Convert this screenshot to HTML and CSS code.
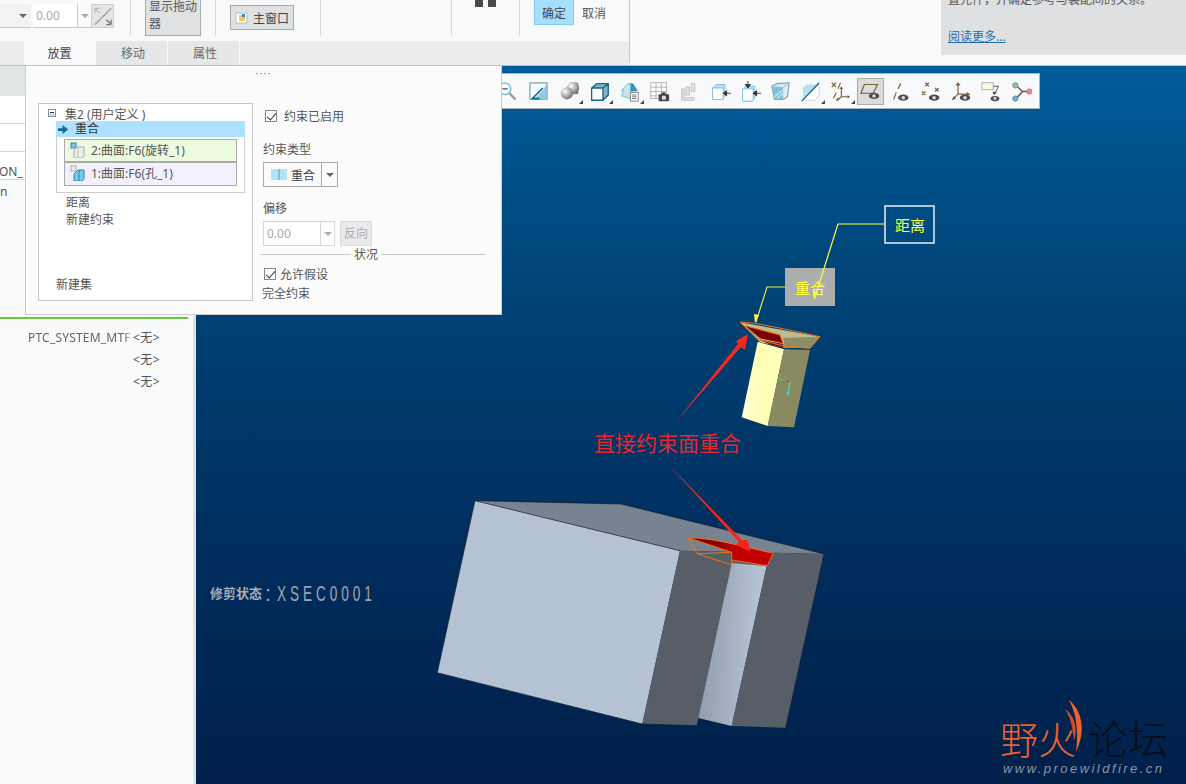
FILE: index.html
```html
<!DOCTYPE html>
<html lang="zh">
<head>
<meta charset="utf-8">
<title>装配约束</title>
<link rel="stylesheet" href="styles.css">
</head>
<body>
<div class="app">
  <header class="ribbon">
    <div class="ribbon-main">
      <div class="ribbon-top">
        <div class="combo-stub"><span class="caret"></span></div>
        <div class="num-input">0.00</div>
        <div class="num-drop"><span class="caret light"></span></div>
        <div class="flip-btn">
          <svg viewBox="0 0 22 22" width="22" height="22"><path d="M3 20 20 3" stroke="#a8a8a8" stroke-width="1.6"/><path d="M3 3h5M3 3v5M3 3l5 5" stroke="#bbb" stroke-width="1.4" fill="none"/><path d="M20 20h-5M20 20v-5M20 20l-5-5" stroke="#777" stroke-width="1.4" fill="none"/></svg>
        </div>
        <div class="vr vr-a"></div>
        <div class="drag-btn">显示拖动<br>器</div>
        <div class="vr vr-b"></div>
        <div class="win-btn">
          <svg viewBox="0 0 14 14" width="14" height="14"><rect x="1" y="2" width="11" height="10" fill="#fff" stroke="#bbb"/><rect x="4" y="4" width="6" height="6" fill="#f2c75c"/><rect x="7" y="3" width="3" height="3" fill="#2a8fd0"/></svg>
          <span>主窗口</span>
        </div>
        <div class="vr vr-c"></div>
        <div class="vr vr-d"></div>
        <div class="pause"><i></i><i></i></div>
        <div class="vr vr-e"></div>
        <div class="ok-btn">确定</div>
        <div class="cancel-btn">取消</div>
      </div>
      <nav class="tabs">
        <div class="tab active">放置</div>
        <div class="tab">移动</div>
        <div class="tab">属性</div>
      </nav>
    </div>
    <div class="ribbon-gap"></div>
    <aside class="help">
      <p class="help-clip">置元件，并确定参考与装配间的关系。</p>
      <a class="help-link">阅读更多...</a>
    </aside>
  </header>

  <div class="body">
    <section class="side">
      <div class="side-row grey"></div>
      <div class="side-row white"></div>
      <div class="side-row white tall"></div>
      <div class="side-row clip-right"><span>ON_</span></div>
      <div class="side-n">n</div>
      <div class="green-line"></div>
      <div class="param"><span class="pname">PTC_SYSTEM_MTF</span><span class="pval">&lt;无&gt;</span></div>
      <div class="param"><span class="pname"></span><span class="pval">&lt;无&gt;</span></div>
      <div class="param"><span class="pname"></span><span class="pval">&lt;无&gt;</span></div>
    </section>

    <main class="view">
      <svg class="scene" viewBox="196 66 990 718" width="990" height="718">
        <defs>
          <linearGradient id="groove" x1="0" y1="0" x2="1" y2="0.1">
            <stop offset="0" stop-color="#8e99a8"/><stop offset="0.85" stop-color="#b4c1d2"/>
          </linearGradient>
          <linearGradient id="cream" x1="0" y1="0" x2="1" y2="0">
            <stop offset="0" stop-color="#ffffd8"/><stop offset="0.4" stop-color="#ffffb8"/>
          </linearGradient>
          <linearGradient id="crescent" x1="0" y1="0" x2="1" y2="0">
            <stop offset="0" stop-color="#5c0000"/><stop offset="1" stop-color="#b00000"/>
          </linearGradient>
        </defs>

        <!-- large block -->
        <polygon points="475,500.7 621,504 824,554 680,550.7" fill="#788391"/>
        <polygon points="475,500.7 680,550.7 642.3,724 437.3,672.7" fill="#b5c2d3"/>
        <polygon points="680,550.7 773.3,552.7 766.7,566 731.7,563.3 696.7,725.7 642.3,724" fill="#585e68"/>
        <polygon points="731.7,563 766.7,566 731.7,726 698.3,718" fill="url(#groove)"/>
        <polygon points="773.3,552.7 824,554 785.7,727.7 731.7,726 766.7,566" fill="#585e68"/>
        <path d="M475 500.7 621 504 824 554 785.7 727.7M475 500.7 680 550.7M475 500.7 437.3 672.7 642.3 724 696.7 725.7" fill="none" stroke="#10161e" stroke-width=".6"/>
        <polygon points="731.7,544 773.3,553.3 767.3,565.7 731.7,560" fill="#c00000"/>
        <path d="M688.3 537.7C703 537.5 718 541 731.7 544V552.3Z" fill="url(#crescent)"/>
        <path d="M688.3 537.7 697.3 553.7 731.7 565V552.3L697.3 553.7M688.3 537.7C715 538 745 547 773.3 553.3L767.3 565.7 731.7 560M688.3 537.7 731.7 552.3" fill="none" stroke="#f07010" stroke-width="1"/>

        <!-- small part -->
        <polygon points="757.7,341.7 784,349.3 767.7,426 741.7,417.3" fill="url(#cream)"/>
        <polygon points="784,349.3 810,350 794,427.3 767.7,426" fill="#8a8a60"/>
        <polygon points="740,322.3 820,336.7 810,348.3 784.3,347.7 760,342" fill="#bcbc8c"/>
        <polygon points="783,338 820,336.7 810,348.3 785,347.5" fill="#8e8e64"/>
        <polygon points="745,325.7 780,335 783.3,343.3 760,338.3" fill="#7c0000"/>
        <polygon points="760,339.5 783,344 784.3,347.7 770,344.5" fill="#7c0000"/>
        <path d="M740 322.3Q745 320 820 336.7L810 348.3 784 346 760 340ZM745 325.7 780 335 784.3 348" fill="none" stroke="#f07010" stroke-width="1"/>
        <path d="M778.3 379 786.7 381" stroke="#4ec04e" stroke-width="1.3"/>
        <path d="M785 381.5h4" stroke="#e04040" stroke-width="1.5"/>
        <path d="M790 381.7 788 393" stroke="#40d8e0" stroke-width="1.2"/>
        <circle cx="788" cy="393" r="1.6" fill="#40d8e0"/>

        <!-- callouts -->
        <rect x="785" y="268" width="50" height="38" fill="#adadad"/>
        <path d="M885 224H838L815 297" fill="none" stroke="#ffff30" stroke-width="1.2"/>
        <path d="M785 287H767L756 322" fill="none" stroke="#e8e840" stroke-width="1.2"/>
        <polygon points="755,323 754,314 759,315" fill="#ffff30"/>
        <polygon points="814,300 813,291 818,292" fill="#ffff30"/>
        <rect x="885" y="206" width="49" height="37" fill="none" stroke="#dbe3ee" stroke-width="1.6"/>
        <text class="t-label" x="910" y="231" text-anchor="middle">距离</text>
        <text class="t-label" x="810" y="294" text-anchor="middle">重合</text>

        <!-- annotations -->
        <polygon points="675,423 738,344 736,341 748,334 745,350 741,347" fill="#f5281e"/>
        <polygon points="668,464 742,540 747.3,540 750.7,551.7 736,545 739,542" fill="#fa2418"/>
        <text class="t-anno" x="594" y="451">直接约束面重合</text>
        <text class="t-trim" x="210" y="598">修剪状态</text>
        <text class="t-xsec" x="265" y="601">:</text>
        <text class="t-xsec" transform="translate(277 601) scale(.62 1)" x="0" y="0" textLength="153">XSEC0001</text>

        <!-- watermark -->
        <path d="M1069 700C1084 712 1085 734 1076 752C1078 737 1078 716 1069 700Z" fill="#f0602c"/>
        <path d="M1065 709C1075 716 1078 728 1074 741C1073 730 1071 718 1065 709Z" fill="#c8502c"/>
        <text class="t-wm-a" x="1000" y="754">野火</text>
        <text class="t-wm-b" x="1088" y="754">论坛</text>
        <text class="t-url" x="1003" y="773" textLength="159">www.proewildfire.cn</text>
      </svg>

      <div class="toolbar">
        <div class="tool"><svg viewBox="0 0 24 24"><circle cx="8" cy="9" r="6.5" fill="#fff" stroke="#58b4d8" stroke-width="1.4"/><path d="M5 9h6" stroke="#1d5f86" stroke-width="1.5"/><path d="M13 14l7 7" stroke="#999" stroke-width="2.6"/></svg></div>
        <div class="tool"><svg viewBox="0 0 24 24"><rect x="2" y="2" width="20" height="19" fill="#8ecbe0" stroke="#9a9a9a"/><path d="M3 3h18C18 11 12 15 8 20H3Z" fill="#f2fafd"/><path d="M5 20 17 8M4 20H13" stroke="#12668f" stroke-width="2"/></svg></div>
        <div class="tool tri"><svg viewBox="0 0 24 24"><defs><radialGradient id="sph" cx=".35" cy=".35" r=".8"><stop offset="0" stop-color="#fff"/><stop offset="1" stop-color="#5c5c5c"/></radialGradient></defs><rect x="13" y="2" width="9" height="13" fill="#7a7a7a"/><circle cx="16" cy="8" r="7" fill="url(#sph)"/><circle cx="9" cy="14" r="7" fill="url(#sph)"/></svg></div>
        <div class="tool tri"><svg viewBox="0 0 24 24"><path d="M3 8 9 3H22V16L16 22H3Z" fill="#7fb6c9"/><rect x="3" y="8" width="13" height="14" fill="#fff"/><path d="M3 8 9 3H22V16L16 22H3ZM3 8H16V22M16 8 22 3" fill="none" stroke="#13658e" stroke-width="1.5"/></svg></div>
        <div class="tool tri"><svg viewBox="0 0 24 24"><path d="M3 11 10 3h6l5 8-8 9-10-3 2-6Z" fill="#c5e5ef" stroke="#6db3cd"/><path d="M13 3h3l5 8-8 1Z" fill="#3a8fb8"/><rect x="13" y="13" width="9" height="10" fill="#fff" stroke="#777"/><path d="M15 16h5M15 18h5M15 20h5" stroke="#666"/></svg></div>
        <div class="tool"><svg viewBox="0 0 24 24"><rect x="2" y="2" width="18" height="18" fill="#fff" stroke="#aaa"/><path d="M2 7h18M2 12h18M2 17h10M8 2v18M14 2v10" stroke="#aaa"/><rect x="11" y="15" width="12" height="8" rx="1" fill="#444"/><rect x="14" y="13" width="5" height="3" fill="#444"/><circle cx="17" cy="19" r="2.5" fill="#ddd"/></svg></div>
        <div class="tool"><svg viewBox="0 0 24 24"><path d="M3 9h3v10h11v3H3Z" fill="#e0e0e0" stroke="#bbb"/><rect x="8" y="7" width="4" height="9" fill="#e6e6e6" stroke="#bbb"/><rect x="14" y="3" width="4" height="9" fill="#e6e6e6" stroke="#bbb"/></svg></div>
        <div class="tool"><svg viewBox="0 0 24 24"><path d="M3 8 7 4H17V17L14 21H3Z" fill="#b8e2f0" stroke="#7ec0da"/><rect x="3" y="8" width="12" height="13" fill="#fff" stroke="#7ec0da"/><path d="M24 14H15M15 14l4-3v6Z" stroke="#333" fill="#333"/></svg></div>
        <div class="tool"><svg viewBox="0 0 24 24"><path d="M3 9 7 6H17V19L14 23H3Z" fill="#b8e2f0" stroke="#7ec0da"/><rect x="3" y="9" width="12" height="14" fill="#fff" stroke="#7ec0da"/><path d="M24 14H15M15 14l4-3v6Z" stroke="#333" fill="#333"/><path d="M9 0V8M9 8 6 4H12Z" stroke="#333" fill="#333"/></svg></div>
        <div class="tool"><svg viewBox="0 0 24 24"><path d="M2 6 8 3 22 2 20 18 15 21 5 21Z" fill="#dcecf2" stroke="#6f9fb2" stroke-width="1.2"/><path d="M2 6 15 7 15 21 5 21Z" fill="#7fc0da"/><path d="M15 7 22 2" stroke="#8fb8c8"/><path d="M5 18 14 11M8 20 15 14" stroke="#c4e6f2" stroke-width="1.6"/></svg></div>
        <div class="tool tri"><svg viewBox="0 0 24 24"><path d="M3 8 8 4H22L4 22Z" fill="#b6dfee"/><path d="M22 4V17L17 22H4Z" fill="#fff"/><path d="M22 5V17L17 22H6" fill="none" stroke="#aaa" stroke-dasharray="1 1"/><path d="M2 23 22 2" stroke="#13658e" stroke-width="1.4"/></svg></div>
        <div class="tool tri"><svg viewBox="0 0 24 24"><path d="M2 2l5 5M7 2 2 7M12 2l-3 7M7 13 4 20M13 8v10M13 18h9M13 18l-5 4" stroke="#7c6238" stroke-width="1.3" fill="none"/><path d="M13 6l-2 3h4ZM23 18l-3-2v4ZM7 23l1-4 3 2Z" fill="#7c6238"/></svg></div>
        <div class="tool selected"><svg viewBox="0 0 24 24"><path d="M5 4H20L15 14H1Z" fill="none" stroke="#7c6238" stroke-width="1.4"/><ellipse cx="16" cy="17" rx="6" ry="3.6" fill="#4d4d4d"/><circle cx="16" cy="17" r="2" fill="#ddd"/></svg></div>
        <div class="tool"><svg viewBox="0 0 24 24"><path d="M11 3 8 9M6 13 3 21" stroke="#7c6238" stroke-width="1.4"/><ellipse cx="14" cy="19" rx="6" ry="3.6" fill="#4d4d4d"/><circle cx="14" cy="19" r="2" fill="#ddd"/></svg></div>
        <div class="tool"><svg viewBox="0 0 24 24"><path d="M5 2l4 4M9 2 5 6M1 12l4 4M5 12l-4 4M16 8l4 4M20 8l-4 4" stroke="#7c6238" stroke-width="1.3"/><ellipse cx="15" cy="19" rx="6" ry="3.6" fill="#4d4d4d"/><circle cx="15" cy="19" r="2" fill="#ddd"/></svg></div>
        <div class="tool"><svg viewBox="0 0 24 24"><path d="M8 3V15H20M8 15 2 21" stroke="#7c6238" stroke-width="1.4" fill="none"/><path d="M8 1 5 5H11ZM22 15l-4-2.5v5ZM1 22l2-5 3 3Z" fill="#7c6238"/><ellipse cx="16" cy="19" rx="6" ry="3.6" fill="#4d4d4d"/><circle cx="16" cy="19" r="2" fill="#ddd"/></svg></div>
        <div class="tool"><svg viewBox="0 0 24 24"><rect x="1" y="2" width="13" height="8" fill="#fdf6e0" stroke="#aaa"/><path d="M14 6H20L16 14" stroke="#444" fill="none"/><path d="M15 16l-2-4 5 1Z" fill="#444"/><ellipse cx="16" cy="20" rx="5" ry="3" fill="#4d4d4d"/><circle cx="16" cy="20" r="1.6" fill="#ddd"/></svg></div>
        <div class="tool"><svg viewBox="0 0 24 24"><path d="M6 5 13 12 6 20M13 12H20" stroke="#555" stroke-width="1.6" fill="none"/><circle cx="5" cy="5" r="3" fill="#8ec48e" stroke="#6a9a6a"/><circle cx="21" cy="12" r="3" fill="#f08a8a" stroke="#b86a6a"/><circle cx="5" cy="20" r="3" fill="#6ab0d8" stroke="#4a88aa"/></svg></div>
      </div>

      <div class="view-edge"></div>
    </main>
  </div>

  <div class="popup">
    <div class="grip">····</div>
    <div class="popup-cols">
      <div class="tree">
        <div class="tree-head">
          <span class="toggle"></span><span>集2 (用户定义 )</span>
        </div>
        <div class="tree-sel">
          <svg viewBox="0 0 12 12" width="11" height="11"><path d="M0 4.5h5V1l6 5-6 5V7.5H0Z" fill="#17688f"/></svg>
          <span>重合</span>
        </div>
        <div class="refs">
          <div class="ref ref-a">
            <svg viewBox="0 0 16 16" width="16" height="16"><rect x="1" y="1" width="5" height="5" fill="#7fc8ea" stroke="#2a86b4"/><path d="M4 8 7 5H14V14L12 16H4Z" fill="#eee" stroke="#aaa"/><path d="M8 5V16" stroke="#bbb"/></svg>
            <span>2:曲面:F6(旋转_1)</span>
          </div>
          <div class="ref ref-b">
            <svg viewBox="0 0 16 16" width="16" height="16"><rect x="1" y="1" width="5" height="5" fill="#eee" stroke="#aaa"/><path d="M4 9 8 5H14V14L12 16H4Z" fill="#7fc8ea" stroke="#2a86b4"/><path d="M9 5V16" stroke="#2a86b4"/></svg>
            <span>1:曲面:F6(孔_1)</span>
          </div>
        </div>
        <div class="tree-item">距离</div>
        <div class="tree-item second">新建约束</div>
        <div class="tree-new">新建集</div>
      </div>

      <div class="form">
        <label class="check first"><span class="box"></span><span class="lab-wide">约束已启用</span></label>
        <div class="f-label type">约束类型</div>
        <div class="type-combo">
          <div class="type-main">
            <svg viewBox="0 0 16 11" width="16" height="11"><rect x="0" width="7.5" height="11" fill="#aee5fd"/><rect x="8.5" width="7.5" height="11" fill="#aee5fd"/><rect x="7.5" width="1" height="11" fill="#777"/></svg>
            <span>重合</span>
          </div>
          <div class="type-drop"><span class="caret"></span></div>
        </div>
        <div class="f-label offset">偏移</div>
        <div class="offset-row">
          <div class="off-input">0.00</div>
          <div class="off-drop"><span class="caret light"></span></div>
          <div class="off-btn">反向</div>
        </div>
        <div class="status-sep"><i></i><span>状况</span><i></i></div>
        <label class="check"><span class="box"></span><span>允许假设</span></label>
        <div class="f-label done">完全约束</div>
      </div>
    </div>
  </div>
</div>
</body>
</html>
```

FILE: styles.css
```css
* { box-sizing: border-box; }
html, body { margin: 0; padding: 0; }
body {
  width: 1186px;
  height: 784px;
  overflow: hidden;
  font-family: "Noto Sans", "Noto Sans CJK SC", sans-serif;
  font-size: 12px;
  color: #555;
  background: #f8f9fb;
}
.app { position: relative; width: 1186px; height: 784px; display: flex; flex-direction: column; overflow: hidden; }

/* ribbon */
.ribbon { height: 66px; flex: none; display: flex; background: #f8f9fb; border-bottom: 1px solid #bcbfc2; }
.ribbon-main { width: 630px; border-right: 1px solid #c4c6c8; height: 63px; display: flex; flex-direction: column; flex: none; }
.ribbon-top { height: 41px; flex: none; display: flex; align-items: flex-start; overflow: hidden; }
.combo-stub { width: 31px; height: 24px; margin-top: 4px; border-bottom: 1px solid #c8c8c8; display: flex; align-items: center; justify-content: flex-end; padding-right: 4px; background: #f1f2f4; }
.caret { display: block; width: 0; height: 0; border-left: 4px solid transparent; border-right: 4px solid transparent; border-top: 4px solid #666; }
.caret.light { border-top-color: #aaa; }
.num-input { width: 44px; height: 24px; margin: 4px 0 0 2px; background: #fff; color: #aaa; padding: 0 3px; line-height: 24px; font-size: 12px; border-bottom: 1px solid #c8c8c8; }
.num-drop { width: 14px; height: 24px; margin-top: 4px; display: flex; align-items: center; justify-content: center; border-left: 1px solid #ccc; border-bottom: 1px solid #c8c8c8; }
.flip-btn { width: 23px; height: 24px; margin-top: 4px; background: #e4e5e7; border: 1px solid #cfcfcf; display: flex; align-items: center; justify-content: center; }
.vr { width: 1px; height: 36px; background: #d4d6d8; flex: none; }
.vr-a { margin-left: 16px; }
.drag-btn { width: 56px; height: 38px; margin: -2px 0 0 14px; background: #e0e1e3; border: 1px solid #aaa; border-top: 0; line-height: 17px; padding: 0 3px; flex: none; color: #555; overflow: hidden; }
.vr-b { margin-left: 14px; }
.win-btn { width: 64px; height: 25px; margin: 5px 0 0 14px; background: #e0e1e3; border: 1px solid #aaa; display: flex; align-items: center; gap: 4px; padding-left: 4px; flex: none; color: #444; }
.vr-c { margin-left: 26px; }
.vr-d { margin-left: 130px; }
.pause { display: flex; gap: 5px; margin-left: 23px; flex: none; }
.pause i { display: block; width: 8px; height: 7px; background: #4a4a4a; }
.vr-e { margin-left: 23px; }
.ok-btn { width: 40px; height: 26px; margin: -1px 0 0 14px; background: #a6defe; border: 1px solid #84cdf7; text-align: center; line-height: 28px; flex: none; color: #444; }
.cancel-btn { margin-left: 8px; line-height: 28px; flex: none; color: #555; }
.tabs { width: 629px; background: #ebecee; display: flex; padding-left: 24px; flex: none; height: 24px; }
.tab { width: 72px; background: #e6e7e9; text-align: center; line-height: 26px; border-right: 1px solid #f8f9fb; color: #666; padding-left: 3px; }
.tab.active { background: #f8f9fb; color: #444; padding-left: 0; }
.ribbon-gap { flex: 1; }
.help { width: 245px; height: 55px; flex: none; background: #dfe0e2; padding: 0 7px; overflow: hidden; }
.help-clip { margin: -9px 0 0; line-height: 18px; color: #555; }
.help-link { display: block; margin-top: 19px; color: #1b6fb0; text-decoration: underline; line-height: 17px; }

/* body */
.body { flex: 1; display: flex; min-height: 0; }
.side { width: 193px; flex: none; background: #f8fafc; position: relative; }
.side-row { height: 28px; border-bottom: 1px solid #d4d6d8; }
.side-row.grey { height: 30px; background: #e1e5e5; border: 0; }
.side-row.white { background: #fff; }
.side-row.clip-right { background: #fff; line-height: 40px; overflow: hidden; }
.side-row.clip-right span { margin-left: -1px; }
.side-n { height: 26px; line-height: 24px; }
.green-line { width: 188px; height: 2px; background: #6bc83c; margin-top: 111px; }
.param { display: flex; height: 22px; line-height: 22px; padding-left: 28px; }
.green-line + .param { margin-top: 8px; }
.pname { width: 105px; overflow: hidden; white-space: nowrap; flex: none; color: #666; letter-spacing: .2px; -webkit-mask-image: linear-gradient(90deg, #000 92%, transparent); mask-image: linear-gradient(90deg, #000 92%, transparent); }
.pval { color: #555; letter-spacing: .5px; }
.view { flex: 1; position: relative; background: linear-gradient(180deg, #005c9a 0%, #004275 33%, #002c5c 70%, #00204a 100%); overflow: hidden; padding-left: 3px; }
.view-edge { position: absolute; left: 0; top: 0; bottom: 0; width: 3px; background: #dfe2e4; }
.scene { position: absolute; left: 3px; top: 0; display: block; }
.t-label { font-size: 15px; fill: #ffff40; font-family: "Noto Sans CJK SC", sans-serif; }
.t-anno { font-size: 21px; fill: #e8252a; font-family: "Noto Sans CJK SC", sans-serif; }
.t-trim { font-size: 13px; fill: #a9aeb6; font-weight: 700; font-family: "Noto Sans CJK SC", sans-serif; }
.t-xsec { font-size: 22px; fill: #a0a6ae; font-family: "Liberation Sans", sans-serif; }
.t-wm-a { font-size: 38px; fill: #f0602c; font-family: "Noto Sans CJK SC", sans-serif; font-weight: 300; }
.t-wm-b { font-size: 40px; fill: #080c18; font-family: "Noto Sans CJK SC", sans-serif; font-weight: 300; }
.t-url { font-size: 13px; fill: #8b95a3; font-style: italic; font-family: "Liberation Sans", sans-serif; }

/* floating toolbar */
.toolbar { position: absolute; right: 146px; top: 7px; height: 36px; background: #f8f9fb; border: 1px solid #aeb2b6; display: flex; align-items: center; padding-right: 2px; }
.tool { width: 30.2px; height: 27px; flex: none; display: flex; align-items: center; justify-content: center; position: relative; }
.tool svg { width: 21px; height: 21px; display: block; }
.tool.tri::after { content: ""; position: absolute; right: 1px; bottom: 1px; border-left: 4px solid transparent; border-bottom: 4px solid #444; }
.tool.selected { background: #dcdcdc; border: 1px solid #aaa; width: 27px; margin: 0 1.6px; }

/* popup */
.popup { position: absolute; left: 25px; top: 66px; width: 477px; height: 249px; background: #fcfcfc; border-right: 1px solid #ccc; border-bottom: 1px solid #ccc; border-left: 1px solid #ccc; display: flex; flex-direction: column; }
.grip { height: 37px; text-align: center; color: #888; font-size: 11px; line-height: 14px; letter-spacing: 1px; }
.popup-cols { display: flex; padding-left: 12px; }
.tree { width: 215px; height: 198px; border: 1px solid #c8c8c8; background: #fff; position: relative; padding-left: 17px; padding-right: 7px; display: flex; flex-direction: column; }
.tree-head { height: 17px; line-height: 21px; display: flex; gap: 6px; margin-left: -8px; }
.toggle { width: 8px; height: 8px; margin-top: 5px; flex: none; border: 1px solid #7a93ad; background: linear-gradient(180deg, #fff 50%, #dcdcdc 50%); position: relative; margin-right: 3px; }
.toggle::after { content: ""; position: absolute; left: 1px; right: 1px; top: 2px; height: 1px; background: #333; }
.tree-sel { height: 16px; background: #aee0ff; display: flex; align-items: center; gap: 6px; padding-left: 2px; color: #333; line-height: 16px; }
.refs { height: 56px; border: 1px solid #ccc; border-top: 0; padding: 2px 7px 0; }
.ref { height: 23px; display: flex; align-items: center; gap: 5px; padding: 0 0 2px 5px; border: 1px solid #aaa; color: #555; }
.ref-a { background: #ecfade; }
.ref-b { background: #f3f0fd; height: 24px; }
.tree-item { padding-left: 10px; line-height: 18px; height: 17px; color: #555; }
.tree-item:nth-child(4) { margin-top: 1px; }
.tree-new { margin-top: 48px; line-height: 18px; }
.form { width: 225px; margin-left: 10px; display: flex; flex-direction: column; }
.check { display: flex; align-items: center; gap: 7px; height: 14px; margin-top: 6px; padding-left: 2px; }
.check:not(.first) { margin-top: 5px; padding-left: 1px; gap: 4px; }
.box { width: 12px; height: 12px; border: 1px solid #888; background: #fff; flex: none; position: relative; }
.box::after { content: ""; position: absolute; left: 3px; top: 0; width: 4px; height: 8px; border-right: 1.6px solid #333; border-bottom: 1.6px solid #333; transform: rotate(40deg); }
.f-label { line-height: 16px; height: 16px; color: #555; }
.f-label.type { margin-top: 19px; }
.type-combo { width: 75px; height: 25px; margin-top: 4px; border: 1px solid #aaa; display: flex; background: #fbfbfb; }
.type-main { width: 58px; display: flex; align-items: center; gap: 4px; padding-left: 7px; border-right: 1px solid #aaa; color: #444; }
.type-drop { flex: 1; display: flex; align-items: center; justify-content: center; }
.f-label.offset { margin-top: 14px; }
.offset-row { display: flex; height: 25px; margin-top: 4px; }
.off-input { width: 57px; background: #fff; border: 1px solid #d6d6d6; border-right: 0; color: #aaa; padding-left: 3px; line-height: 23px; }
.off-drop { width: 15px; background: #fff; border: 1px solid #d6d6d6; display: flex; align-items: center; justify-content: center; }
.off-btn { width: 32px; margin-left: 5px; background: #eaeaea; border: 1px solid #ddd; color: #aaa; text-align: center; line-height: 23px; }
.status-sep { display: flex; align-items: center; gap: 3px; height: 16px; margin-left: -3px; width: 226px; }
.status-sep i { display: block; height: 1px; background: #c8c8c8; flex: 1; }
.status-sep i:first-child { flex: none; width: 91px; }
.f-label.done { margin-top: 5px; margin-left: -1px; }
```
